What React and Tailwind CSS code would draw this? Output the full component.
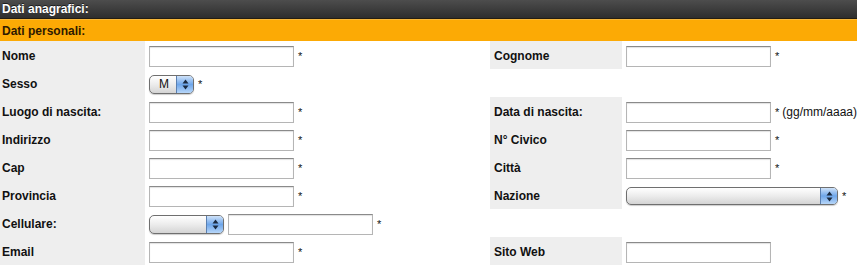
import React from "react";

const Star = ({ extra }) => (
  <span className="ml-[4px] text-[11px] text-[#111]">
    *{extra ? <span className="ml-[3px] text-[12px]">{extra}</span> : null}
  </span>
);

function TextBox({ w = "w-[145px]" }) {
  return (
    <div
      className={`${w} h-[21px] bg-white border border-[#b5b5b5] border-t-[#8a8a8a] shadow-[inset_0_1px_1px_rgba(0,0,0,0.12)]`}
    />
  );
}

function AquaSelect({ w, h = "h-[19px]", value }) {
  return (
    <div
      className={`${w} ${h} flex rounded-[5px] border border-[#6f6f6f] overflow-hidden bg-gradient-to-b from-[#ffffff] via-[#ececec] to-[#d4d4d4] shadow-[0_1px_1px_rgba(0,0,0,0.2)]`}
    >
      <div className="flex-1 flex items-center pl-[9px] text-[12px] text-[#111]">
        {value}
      </div>
      <div className="w-[17px] flex items-center justify-center border-l border-[#5a7fb0] bg-gradient-to-b from-[#cfe2f8] via-[#6ea6ea] to-[#b7d6f8]">
        <svg width="7" height="11" viewBox="0 0 7 11">
          <path d="M3.5 0.5 L6.5 4.5 L0.5 4.5 Z" fill="#1a2a40" />
          <path d="M3.5 10.5 L6.5 6.5 L0.5 6.5 Z" fill="#1a2a40" />
        </svg>
      </div>
    </div>
  );
}

const Label = ({ children, right }) => (
  <div
    className={`h-[28px] flex items-center pt-[2px] bg-[#eeeeee] font-bold text-[12px] text-[#111] ${
      right ? "pl-[4px]" : "pl-[2px]"
    }`}
  >
    {children}
  </div>
);

const Blank = () => <div className="h-[28px]" />;

const Field = ({ children }) => (
  <div className="h-[28px] flex items-center pl-[4px] pt-[2px]">{children}</div>
);

export default function App() {
  return (
    <div
      className="w-[857px] h-[265px] bg-white overflow-hidden"
      style={{ fontFamily: '"Liberation Sans", Arial, sans-serif' }}
    >
      <div className="h-[19px] flex items-center pl-[2px] bg-gradient-to-b from-[#4d4d4d] to-[#2e2e2e] border-b border-[#231d12] text-white font-bold text-[12px] [text-shadow:0_-1px_0_rgba(0,0,0,0.6)]">
        Dati anagrafici:
      </div>
      <div className="h-[22px] flex items-center pl-[2px] bg-[#fcaa05] border-t border-[#f7b73a] text-[#2e1a00] font-bold text-[12px]">
        Dati personali:
      </div>

      <div className="grid grid-cols-[145px_345px_132px_1fr]">
        <Label>Nome</Label>
        <Field>
          <TextBox />
          <Star />
        </Field>
        <Label right>Cognome</Label>
        <Field>
          <TextBox />
          <Star />
        </Field>

        <Label>Sesso</Label>
        <Field>
          <AquaSelect w="w-[45px]" value="M" />
          <Star />
        </Field>
        <Blank />
        <Blank />

        <Label>Luogo di nascita:</Label>
        <Field>
          <TextBox />
          <Star />
        </Field>
        <Label right>Data di nascita:</Label>
        <Field>
          <TextBox />
          <Star extra="(gg/mm/aaaa)" />
        </Field>

        <Label>Indirizzo</Label>
        <Field>
          <TextBox />
          <Star />
        </Field>
        <Label right>N° Civico</Label>
        <Field>
          <TextBox />
          <Star />
        </Field>

        <Label>Cap</Label>
        <Field>
          <TextBox />
          <Star />
        </Field>
        <Label right>Città</Label>
        <Field>
          <TextBox />
          <Star />
        </Field>

        <Label>Provincia</Label>
        <Field>
          <TextBox />
          <Star />
        </Field>
        <Label right>Nazione</Label>
        <Field>
          <AquaSelect w="w-[212px]" h="h-[18px]" />
          <Star />
        </Field>

        <Label>Cellulare:</Label>
        <Field>
          <AquaSelect w="w-[75px]" />
          <div className="ml-[4px]">
            <TextBox />
          </div>
          <Star />
        </Field>
        <Blank />
        <Blank />

        <Label>Email</Label>
        <Field>
          <TextBox />
          <Star />
        </Field>
        <Label right>Sito Web</Label>
        <Field>
          <TextBox />
        </Field>
      </div>
    </div>
  );
}
